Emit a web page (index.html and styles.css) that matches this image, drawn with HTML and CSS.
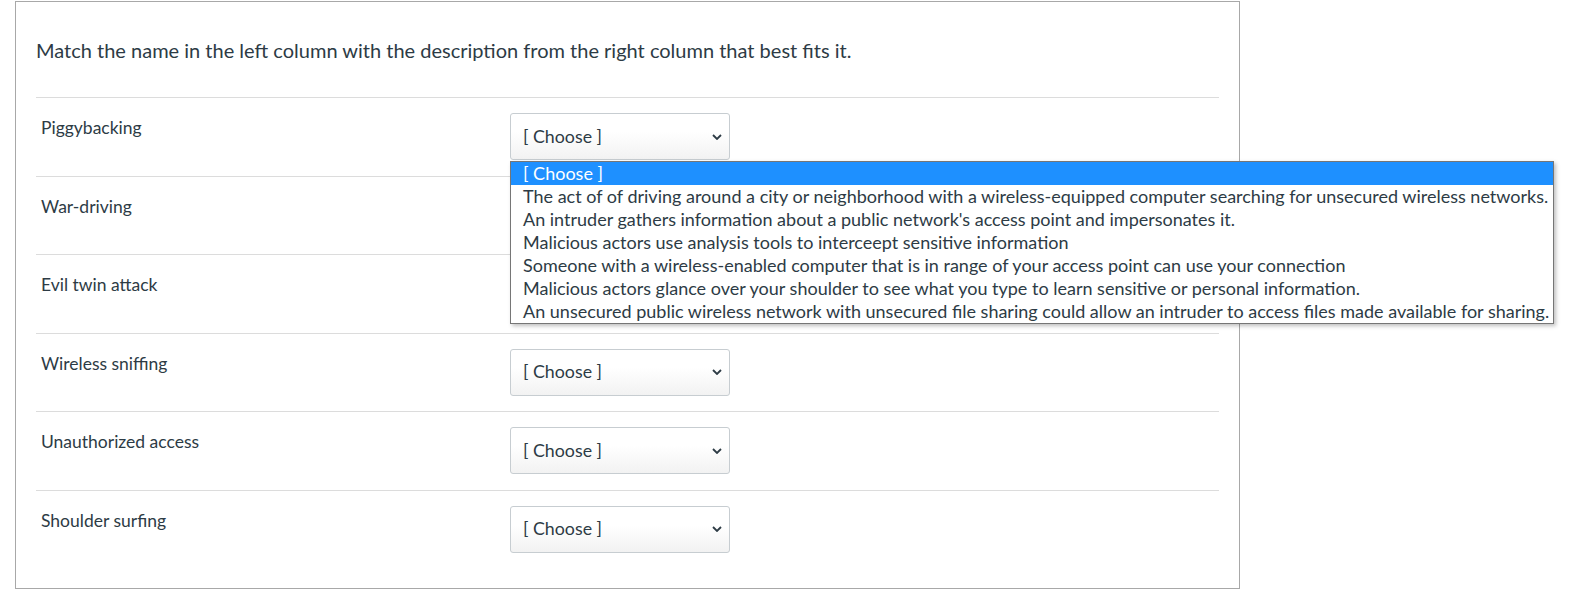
FILE: index.html
```html
<!DOCTYPE html>
<html>
<head>
<meta charset="utf-8">
<link rel="stylesheet" href="styles.css">
</head>
<body>
<div class="page">
  <div class="question">
    <p class="prompt">Match the name in the left column with the description from the right column that best fits it.</p>
    <div class="answers">
      <div class="row">
        <div class="label">Piggybacking</div>
        <div class="choice">
          <div class="select"><span>[ Choose ]</span><svg class="chev" viewBox="0 0 10 6" width="10" height="6"><path d="M1 1 L5 5 L9 1" fill="none" stroke="#2d3b45" stroke-width="1.8"/></svg></div>
          <div class="menu">
            <div class="opt active">[ Choose ]</div>
            <div class="opt">The act of of driving around a city or neighborhood with a wireless-equipped computer searching for unsecured wireless networks.</div>
            <div class="opt">An intruder gathers information about a public network's access point and impersonates it.</div>
            <div class="opt">Malicious actors use analysis tools to interceept sensitive information</div>
            <div class="opt">Someone with a wireless-enabled computer that is in range of your access point can use your connection</div>
            <div class="opt">Malicious actors glance over your shoulder to see what you type to learn sensitive or personal information.</div>
            <div class="opt">An unsecured public wireless network with unsecured file sharing could allow an intruder to access files made available for sharing.</div>
          </div>
        </div>
      </div>
      <div class="row">
        <div class="label">War-driving</div>
        <div class="choice"><div class="select"><span>[ Choose ]</span><svg class="chev" viewBox="0 0 10 6" width="10" height="6"><path d="M1 1 L5 5 L9 1" fill="none" stroke="#2d3b45" stroke-width="1.8"/></svg></div></div>
      </div>
      <div class="row">
        <div class="label">Evil twin attack</div>
        <div class="choice"><div class="select"><span>[ Choose ]</span><svg class="chev" viewBox="0 0 10 6" width="10" height="6"><path d="M1 1 L5 5 L9 1" fill="none" stroke="#2d3b45" stroke-width="1.8"/></svg></div></div>
      </div>
      <div class="row">
        <div class="label">Wireless sniffing</div>
        <div class="choice"><div class="select"><span>[ Choose ]</span><svg class="chev" viewBox="0 0 10 6" width="10" height="6"><path d="M1 1 L5 5 L9 1" fill="none" stroke="#2d3b45" stroke-width="1.8"/></svg></div></div>
      </div>
      <div class="row">
        <div class="label">Unauthorized access</div>
        <div class="choice"><div class="select"><span>[ Choose ]</span><svg class="chev" viewBox="0 0 10 6" width="10" height="6"><path d="M1 1 L5 5 L9 1" fill="none" stroke="#2d3b45" stroke-width="1.8"/></svg></div></div>
      </div>
      <div class="row">
        <div class="label">Shoulder surfing</div>
        <div class="choice"><div class="select"><span>[ Choose ]</span><svg class="chev" viewBox="0 0 10 6" width="10" height="6"><path d="M1 1 L5 5 L9 1" fill="none" stroke="#2d3b45" stroke-width="1.8"/></svg></div></div>
      </div>
    </div>
  </div>
</div>
</body>
</html>
```
FILE: styles.css
```css
html, body {
  margin: 0;
  padding: 0;
  background: #fff;
}
body {
  font-family: Lato, "Open Sans", sans-serif;
  color: #2d3b45;
}
.page {
  padding: 1px 0 0 15px;
}
.question {
  width: 1225px;
  height: 588px;
  border: 1px solid #a8a8a8;
  box-sizing: border-box;
  padding: 0 20px 0 20px;
}
.prompt {
  margin: 0;
  padding-top: 33px;
  height: 95px;
  box-sizing: border-box;
  font-size: 20px;
  line-height: 30px;
}
.answers {
  display: flex;
  flex-direction: column;
}
.row {
  display: flex;
  border-top: 1px solid #dcdcdc;
  height: 78.6px;
  box-sizing: border-box;
  padding-top: 15px;
}
.label {
  width: 474px;
  padding-left: 5px;
  padding-top: 3px;
  box-sizing: border-box;
  font-size: 17.5px;
  line-height: 24px;
}
.choice {
  position: relative;
}
.select {
  width: 220px;
  height: 47px;
  box-sizing: border-box;
  border: 1px solid #c7cdd1;
  border-radius: 3px;
  background: linear-gradient(#ffffff 40%, #f2f2f2);
  display: flex;
  align-items: center;
  justify-content: space-between;
  padding: 0 7px 2px 12px;
  font-size: 17.8px;
}
.chev {
  display: block;
  margin-top: 2px;
}
.menu {
  position: absolute;
  left: 0;
  top: 48px;
  width: 1044px;
  border: 1px solid #767676;
  background: #fff;
  box-shadow: 2px 2px 4px rgba(0,0,0,0.25);
  box-sizing: border-box;
  z-index: 5;
}
.opt {
  font-size: 18px;
  line-height: 22px;
  height: 23px;
  padding-left: 12px;
  white-space: nowrap;
  color: #2d3b45;
}
.opt.active {
  background: #1e90ff;
  color: #fff;
}
```
